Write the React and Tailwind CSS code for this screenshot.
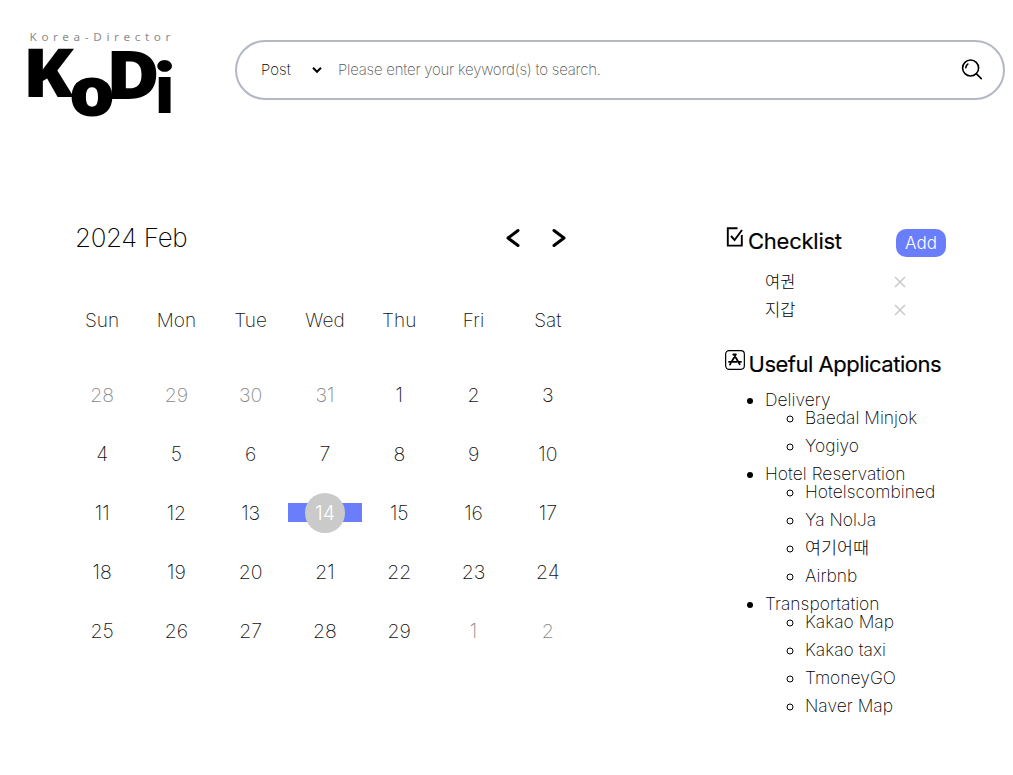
import React from "react";

const DAYS = ["Sun", "Mon", "Tue", "Wed", "Thu", "Fri", "Sat"];
const DATES = [
  28, 29, 30, 31, 1, 2, 3,
  4, 5, 6, 7, 8, 9, 10,
  11, 12, 13, 14, 15, 16, 17,
  18, 19, 20, 21, 22, 23, 24,
  25, 26, 27, 28, 29, 1, 2,
];
const APPS = [
  { name: "Delivery", items: ["Baedal Minjok", "Yogiyo"] },
  { name: "Hotel Reservation", items: ["Hotelscombined", "Ya NolJa", "여기어때", "Airbnb"] },
  { name: "Transportation", items: ["Kakao Map", "Kakao taxi", "TmoneyGO", "Naver Map"] },
];

function Logo() {
  return (
    <svg width="160" height="96" viewBox="20 28 160 96" className="block shrink-0 overflow-visible font-['Open_Sans',sans-serif]">
      <text x="29.5" y="41.3" fontSize="10" fontWeight="400" fill="#8c8c8c" textLength="145.5" lengthAdjust="spacingAndGlyphs" className="font-['Noto_Sans',sans-serif] tracking-[4px]">Korea-Director</text>
      <g fontWeight="800" fill="#000">
        <text x="22.8" y="97" fontSize="68" textLength="51" lengthAdjust="spacingAndGlyphs">K</text>
        <text x="68.5" y="116" fontSize="69" textLength="47" lengthAdjust="spacingAndGlyphs">o</text>
        <text x="106" y="99" fontSize="68" textLength="54" lengthAdjust="spacingAndGlyphs">D</text>
        <text x="153.6" y="113" fontSize="70" fontWeight="900" textLength="22.3" lengthAdjust="spacingAndGlyphs" className="font-['Lato',sans-serif]">i</text>
      </g>
    </svg>
  );
}

function SearchBar() {
  return (
    <div className="ml-[55px] flex h-[60px] w-[770px] items-center rounded-[30px] border-2 border-[#b4b8c5] pl-6">
      <span className="w-[50px] pt-px text-[15px] tracking-[0.05px]">Post</span>
      <svg width="12" height="8" viewBox="0 0 12 8" fill="none" stroke="#000" strokeWidth="2">
        <path d="M2 1.8 6 5.8 10 1.8" />
      </svg>
      <span className="ml-[15px] grow pt-px text-[15px] tracking-[-0.23px] text-[#555]">Please enter your keyword(s) to search.</span>
      <svg width="22" height="22" viewBox="0 0 22 22" fill="none" stroke="#000" strokeWidth="1.6" className="mr-5 block" strokeLinecap="round">
        <circle cx="9.6" cy="9" r="8" />
        <path d="M15.2 14.7 20.3 19.6M4.8 8.7A5 5 0 0 1 6.8 5.1" />
      </svg>
    </div>
  );
}

function Calendar() {
  return (
    <section className="w-[520px]">
      <div className="flex h-[56px] items-center justify-between pl-[10px] pr-[19px]">
        <h2 className="mb-[2px] text-[26px] tracking-[-0.35px]">2024 Feb</h2>
        <div className="flex gap-8">
          <svg width="14" height="20" viewBox="0 0 14 20" fill="none" stroke="#000" strokeWidth="3" strokeLinecap="round" strokeLinejoin="round"><path d="M12 2.5 2 10 12 17.5" /></svg>
          <svg width="14" height="20" viewBox="0 0 14 20" fill="none" stroke="#000" strokeWidth="3" strokeLinecap="round" strokeLinejoin="round"><path d="M2 2.5 12 10 2 17.5" /></svg>
        </div>
      </div>
      <div className="mt-[25px] grid h-[60px] grid-cols-7 items-center text-center text-[19px] tracking-[0.05px] text-[#111]">
        {DAYS.map((d) => <div key={d}>{d}</div>)}
      </div>
      <div className="mt-[14px] grid auto-rows-[59px] grid-cols-7 items-center text-center text-[19.5px] leading-[19px] text-[#111]">
        {DATES.map((d, i) => {
          if (i === 17) {
            return (
              <div key={i} className="flex h-[19px] items-center justify-center bg-[#6a7efc]">
                <span className="flex size-10 shrink-0 items-center justify-center rounded-full bg-[#cacaca] pt-[2px] font-light text-white">{d}</span>
              </div>
            );
          }
          return <div key={i} className={i < 4 || i > 32 ? "pt-[2px] text-[#888]" : "pt-[2px]"}>{d}</div>;
        })}
      </div>
    </section>
  );
}

function Sidebar() {
  return (
    <aside className="ml-[140px] w-[240px] pt-[16px] text-[17px] leading-[18px]">
      <div className="flex h-[30px] items-center">
        <svg width="18" height="20" viewBox="0 0 18 20" fill="none" stroke="#000" strokeWidth="1.9" className="mb-[9px] ml-px"><path d="M11.5 1.2H1.8V18.6H15.8V8M5 9l3.6 4L16 3" /></svg>
        <h3 className="ml-[4px] w-[148px] text-[22px] font-normal tracking-[-0.25px] [-webkit-text-stroke:0.15px_black]">Checklist</h3>
        <button className="mt-[4px] h-[28px] w-[50px] rounded-[10px] bg-[#6a7efc] text-[17px] font-light text-white">Add</button>
      </div>
      <ul className="mt-[17px] pl-10">
        {["여권", "지갑"].map((t) => (
          <li key={t} className="mb-[10px] flex h-[18px] items-center">
            <span className="w-[129px] text-[16.5px] font-light">{t}</span>
            <svg width="12" height="12" viewBox="0 0 12 12" stroke="#ccc" strokeWidth="1.7"><path d="M1 1 11 11M11 1 1 11" /></svg>
          </li>
        ))}
      </ul>
      <div className="mt-[25px] flex h-[40px] items-center">
        <svg width="20" height="20" viewBox="0 0 20 20" fill="none" stroke="#000" className="mb-[9px]">
          <rect x=".65" y=".65" width="18.7" height="18.7" rx="3.5" strokeWidth="1.2" />
          <path d="M8.3 4.5h2.6M10.9 4.5 6.9 11.3M9.3 5 14.7 14.2M4 11.8h7.5M13.5 11.8H16M5.7 13.4 5 14.6" strokeWidth="1.8" strokeLinecap="round" />
        </svg>
        <h3 className="ml-[3.5px] whitespace-nowrap text-[22px] font-normal tracking-[-0.48px] [-webkit-text-stroke:0.15px_black]">Useful Applications</h3>
      </div>
      <ul className="mt-[7px] list-disc pl-10 text-[17.4px] tracking-[0.04px]">
        {APPS.map((g) => (
          <li key={g.name}>
            {g.name}
            <ul className="list-[circle] pl-10">
              {g.items.map((t) => <li key={t} className="mb-[10px] h-[18px]">{t}</li>)}
            </ul>
          </li>
        ))}
      </ul>
    </aside>
  );
}

export default function App() {
  return (
    <div className="h-[775px] w-[1013px] overflow-hidden bg-white font-['Inter','Noto_Sans_CJK_KR',sans-serif] font-extralight text-black">
      <header className="flex h-[140px] items-center pl-[20px]">
        <div className="mt-[12px]"><Logo /></div>
        <SearchBar />
      </header>
      <main className="flex items-start pl-[65px] pt-[70px]">
        <Calendar />
        <Sidebar />
      </main>
    </div>
  );
}
